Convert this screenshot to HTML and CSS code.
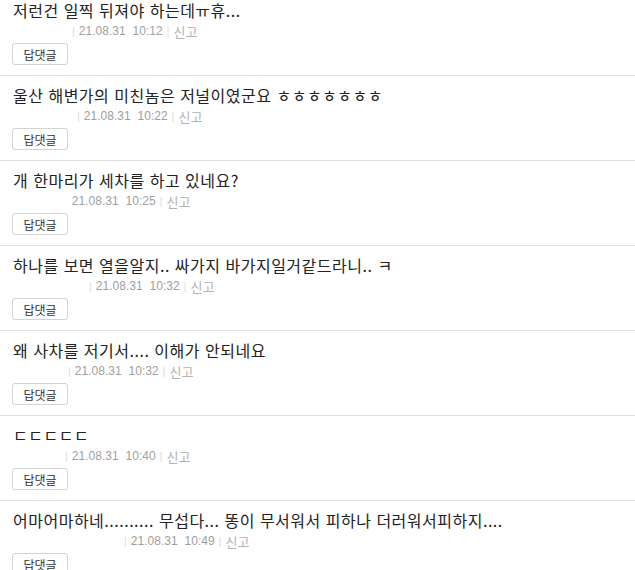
FILE: index.html
```html
<!DOCTYPE html>
<html lang="ko">
<head>
    <meta charset="UTF-8">
    <meta name="viewport" content="width=device-width, initial-scale=1.0">
    <title>댓글</title>
    <link rel="stylesheet" href="styles.css">
</head>
<body>
    <ul class="comment-list">
        <li class="comment">
            <p class="comment-text">저런건 일찍 뒤져야 하는데ㅠ휴...</p>
            <div class="comment-meta">
                <span class="nick" style="width: 55px"></span>
                <span class="bar">|</span>
                <span class="date">21.08.31</span><span class="time">10:12</span>
                <span class="bar">|</span>
                <a class="report">신고</a>
            </div>
            <button class="reply-button">답댓글</button>
        </li>
        <li class="comment">
            <p class="comment-text">울산 해변가의 미친놈은 저널이였군요 ㅎㅎㅎㅎㅎㅎㅎ</p>
            <div class="comment-meta">
                <span class="nick" style="width: 60px"></span>
                <span class="bar">|</span>
                <span class="date">21.08.31</span><span class="time">10:22</span>
                <span class="bar">|</span>
                <a class="report">신고</a>
            </div>
            <button class="reply-button">답댓글</button>
        </li>
        <li class="comment">
            <p class="comment-text">개 한마리가 세차를 하고 있네요?</p>
            <div class="comment-meta">
                <span class="nick" style="width: 48px"></span>
                <span class="bar bar-hidden">|</span>
                <span class="date">21.08.31</span><span class="time">10:25</span>
                <span class="bar">|</span>
                <a class="report">신고</a>
            </div>
            <button class="reply-button">답댓글</button>
        </li>
        <li class="comment">
            <p class="comment-text">하나를 보면 열을알지.. 싸가지 바가지일거같드라니.. ㅋ</p>
            <div class="comment-meta">
                <span class="nick" style="width: 72px"></span>
                <span class="bar">|</span>
                <span class="date">21.08.31</span><span class="time">10:32</span>
                <span class="bar">|</span>
                <a class="report">신고</a>
            </div>
            <button class="reply-button">답댓글</button>
        </li>
        <li class="comment">
            <p class="comment-text">왜 사차를 저기서.... 이해가 안되네요</p>
            <div class="comment-meta">
                <span class="nick" style="width: 51px"></span>
                <span class="bar">|</span>
                <span class="date">21.08.31</span><span class="time">10:32</span>
                <span class="bar">|</span>
                <a class="report">신고</a>
            </div>
            <button class="reply-button">답댓글</button>
        </li>
        <li class="comment">
            <p class="comment-text">ㄷㄷㄷㄷㄷ</p>
            <div class="comment-meta">
                <span class="nick" style="width: 48px"></span>
                <span class="bar">|</span>
                <span class="date">21.08.31</span><span class="time">10:40</span>
                <span class="bar">|</span>
                <a class="report">신고</a>
            </div>
            <button class="reply-button">답댓글</button>
        </li>
        <li class="comment">
            <p class="comment-text">어마어마하네.......... 무섭다... 똥이 무서워서 피하나 더러워서피하지....</p>
            <div class="comment-meta">
                <span class="nick" style="width: 107px"></span>
                <span class="bar">|</span>
                <span class="date">21.08.31</span><span class="time">10:49</span>
                <span class="bar">|</span>
                <a class="report">신고</a>
            </div>
            <button class="reply-button">답댓글</button>
        </li>
    </ul>
</body>
</html>
```

FILE: styles.css
```css
html, body {
    overflow: hidden;
}
body {
    font-family: "Noto Sans CJK KR", "Noto Sans", sans-serif;
    margin: 0;
    background: #fff;
    color: #222;
}
.comment-list {
    list-style: none;
    margin: -9px 0 0;
    padding: 0;
}
.comment {
    padding: 8px 12px 10px 13px;
    border-bottom: 1px solid #dedede;
}
.comment-text {
    margin: 0;
    font-size: 16px;
    letter-spacing: 0.5px;
    line-height: 22px;
    white-space: nowrap;
}
.comment-meta {
    display: flex;
    align-items: center;
    height: 20px;
    font-family: "Liberation Sans", Arial, sans-serif;
    font-size: 12px;
    color: #a0a0a0;
}
.nick {
    display: inline-block;
    height: 12px;
}
.bar {
    color: #ddd;
    font-size: 11px;
    margin: 0 4px;
}
.bar-hidden {
    visibility: hidden;
}
.time {
    margin-left: 7px;
}
.report {
    font-family: "Noto Sans CJK KR", sans-serif;
    font-size: 13px;
    color: #b3b3b3;
}
.reply-button {
    display: block;
    margin: 2px 0 0 -1px;
    width: 56px;
    height: 22px;
    padding: 0;
    background: #fff;
    border: 1px solid #d3d3d3;
    border-radius: 3px;
    font-family: "Noto Sans CJK KR", sans-serif;
    font-size: 12px;
    color: #333;
    cursor: pointer;
}
```
